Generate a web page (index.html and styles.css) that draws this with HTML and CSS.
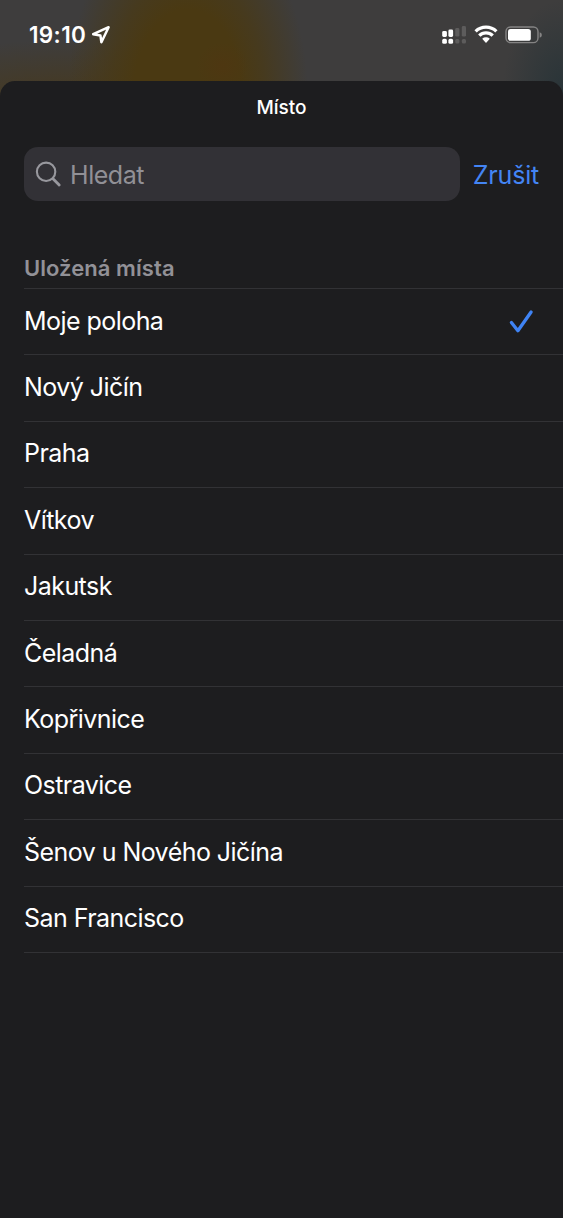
FILE: index.html
```html
<!DOCTYPE html>
<html lang="cs">
<head>
<meta charset="utf-8">
<title>Místo</title>
<link rel="stylesheet" href="styles.css">
</head>
<body>
<div class="screen">
  <header class="status">
    <div class="status-left">
      <span class="clock">19:10</span>
      <svg class="location" width="20" height="20" viewBox="0 0 20 20"><path d="M2.2 9.2 17.6 2.2 10.4 17.2 9.4 10.4Z" fill="none" stroke="#fff" stroke-width="2.5" stroke-linejoin="round"/></svg>
    </div>
    <div class="status-right">
      <svg width="25" height="20" viewBox="0 0 25 20">
        <g fill="#fff"><rect x="0.2" y="6" width="4.7" height="5.9" rx="1.4"/><rect x="6.4" y="4.6" width="4.7" height="7.3" rx="1.4"/><rect x="0.2" y="13.8" width="4.7" height="5" rx="1.6"/><rect x="6.4" y="13.8" width="4.7" height="5" rx="1.6"/></g>
        <g fill="#5d5c5c"><rect x="13.2" y="3" width="4.2" height="8.6" rx="1.4"/><rect x="19.8" y="1" width="4.2" height="10.6" rx="1.4"/><rect x="13.2" y="14" width="4.2" height="4.4" rx="1.5"/><rect x="19.8" y="14" width="4.2" height="4.4" rx="1.5"/></g>
      </svg>
      <svg class="wifi" width="24" height="20" viewBox="0 0 24 20"><g fill="none" stroke="#fff" stroke-width="3.3"><path d="M1.6 6.4A15 15 0 0 1 22.4 6.4"/><path d="M5.3 10.7A9.5 9.5 0 0 1 18.7 10.7"/></g><path d="M8.2 13.8a5.6 5.6 0 0 1 7.6 0L12 17.9Z" fill="#fff"/></svg>
      <svg class="battery" width="38" height="20" viewBox="0 0 38 20"><rect x="1" y="2" width="32" height="15.6" rx="4.6" fill="none" stroke="#858484" stroke-width="1.4"/><rect x="3" y="4" width="22.8" height="11.8" rx="2.6" fill="#fff"/><path d="M34.7 7.2q2.2.8 2.2 2.8t-2.2 2.8Z" fill="#858484"/></svg>
    </div>
  </header>
  <main class="sheet">
    <h1 class="title">Místo</h1>
    <div class="search-row">
      <div class="search">
        <svg width="28" height="28" viewBox="0 0 28 28" fill="none" stroke="#98989e" stroke-linecap="round"><circle cx="11.1" cy="11.8" r="9.2" stroke-width="2.1"/><path d="M18.2 18.9 24.2 25" stroke-width="2.8"/></svg>
        <span class="placeholder">Hledat</span>
      </div>
      <a class="cancel">Zrušit</a>
    </div>
    <h2 class="section">Uložená místa</h2>
    <ul class="places">
      <li><span>Moje poloha</span><svg class="check" width="26" height="26" viewBox="0 0 26 26"><path d="M3.4 14.5 9.9 22.8 23.1 4" fill="none" stroke="#3f83f4" stroke-width="3.3" stroke-linecap="round" stroke-linejoin="round"/></svg></li>
      <li><span>Nový Jičín</span></li>
      <li><span>Praha</span></li>
      <li><span>Vítkov</span></li>
      <li><span>Jakutsk</span></li>
      <li><span>Čeladná</span></li>
      <li><span>Kopřivnice</span></li>
      <li><span>Ostravice</span></li>
      <li><span>Šenov u Nového Jičína</span></li>
      <li><span>San Francisco</span></li>
    </ul>
  </main>
</div>
</body>
</html>
```
FILE: styles.css
```css
* { box-sizing: border-box; margin: 0; padding: 0; }
body { background: #1d1d1f; color: #fff; font-family: Inter, "Liberation Sans", sans-serif; }
.screen {
  height: 1218px; display: flex; flex-direction: column; overflow: hidden;
  background:
    radial-gradient(ellipse 26px 24px at 222px 66px, rgba(82,52,16,.45), rgba(82,52,16,0)),
    radial-gradient(ellipse 60px 90px at 563px 90px, #293438, rgba(41,52,56,0)),
    radial-gradient(ellipse 120px 190px at 188px 95px, #4a3912 0%, #4a3912 45%, rgba(73,57,20,.75) 64%, rgba(73,57,20,0) 100%),
    radial-gradient(ellipse 190px 60px at 60px 100px, #46391f, rgba(70,57,31,0)),
    #3e3d3d;
}
.status { height: 81px; flex: none; display: flex; justify-content: space-between; padding: 25px 20px 0 29px; }
.status-left, .status-right { display: flex; height: 20px; align-items: center; }
.clock { font-size: 22.5px; font-weight: 600; line-height: 20px; letter-spacing: .35px; }
.location { margin-left: 4.5px; }
.wifi { margin-left: 7px; }
.battery { margin-left: 7px; }
.sheet { flex: 1; background: #1d1d1f; border-radius: 15px 15px 0 0; }
.title { height: 66px; padding-top: 15px; font-size: 19px; line-height: 24px; font-weight: 500; text-align: center; }
.search-row { display: flex; height: 54px; padding: 0 24px; align-items: center; justify-content: space-between; }
.search { width: 436px; height: 54px; border-radius: 14px; background: #323136; display: flex; align-items: center; padding-left: 11px; }
.placeholder { margin-left: 7px; padding-top: 2px; font-size: 25px; color: #919096; letter-spacing: -.45px; }
.cancel { padding-top: 1px; font-size: 25px; color: #4485f4; letter-spacing: -.2px; }
.section { margin: 54px 0 0 24px; height: 33px; line-height: 27px; font-size: 22px; font-weight: 600; color: #929197; letter-spacing: .06px; }
.places { list-style: none; margin-left: 24px; border-top: 1px solid #323235; }
.places li { height: 66.4px; display: flex; align-items: center; justify-content: space-between; padding: 0 29px 2px 0; border-bottom: 1px solid #323235; font-size: 25px; letter-spacing: -.55px; }
```
